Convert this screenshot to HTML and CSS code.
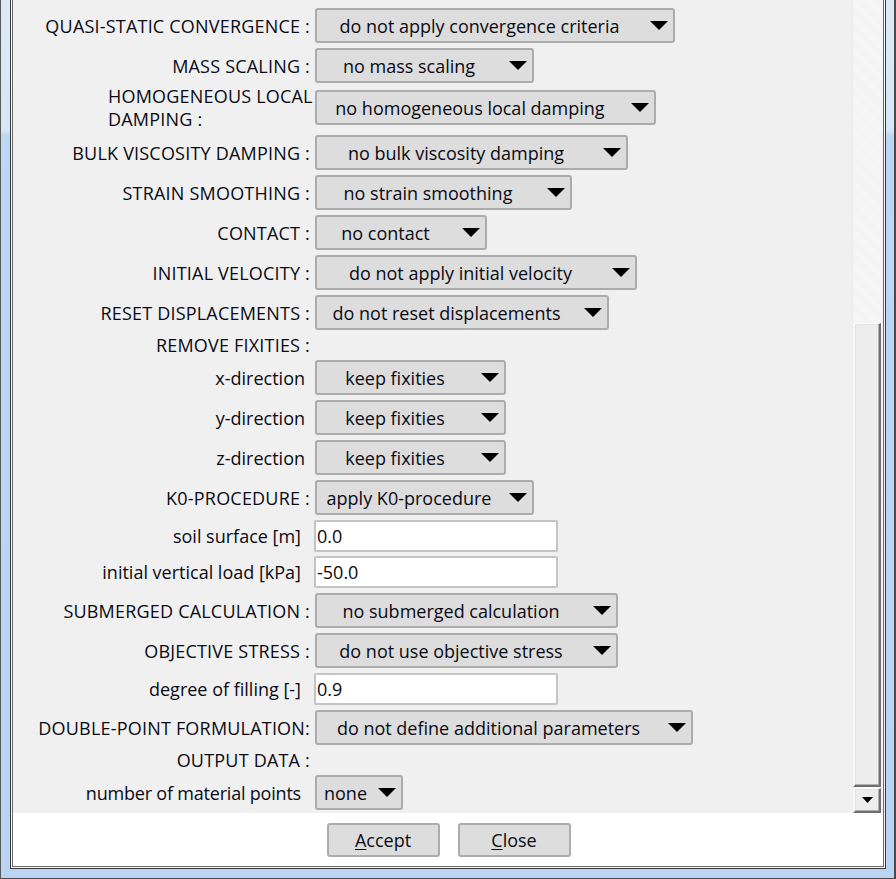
FILE: index.html
```html
<!DOCTYPE html>
<html>
<head>
<meta charset="utf-8">
<link rel="stylesheet" href="styles.css">
</head>
<body>
<div class="frame">
  <div class="client">
    <div class="panel">
      <div class="main">
        <div class="form">
          <div class="row r1">
            <span class="lbl caps">QUASI-STATIC CONVERGENCE :</span>
            <div class="combo w360"><span class="val">do not apply convergence criteria</span><svg class="arr" width="18" height="9" viewBox="0 0 18 9"><polygon points="0,0 18,0 9,9"/></svg></div>
          </div>
          <div class="row">
            <span class="lbl caps">MASS SCALING :</span>
            <div class="combo w219"><span class="val">no mass scaling</span><svg class="arr" width="18" height="9" viewBox="0 0 18 9"><polygon points="0,0 18,0 9,9"/></svg></div>
          </div>
          <div class="row tall">
            <span class="lbl caps multi">HOMOGENEOUS LOCAL<br>DAMPING :</span>
            <div class="combo w341"><span class="val">no homogeneous local damping</span><svg class="arr" width="18" height="9" viewBox="0 0 18 9"><polygon points="0,0 18,0 9,9"/></svg></div>
          </div>
          <div class="row">
            <span class="lbl caps">BULK VISCOSITY DAMPING :</span>
            <div class="combo w313"><span class="val">no bulk viscosity damping</span><svg class="arr" width="18" height="9" viewBox="0 0 18 9"><polygon points="0,0 18,0 9,9"/></svg></div>
          </div>
          <div class="row">
            <span class="lbl caps">STRAIN SMOOTHING :</span>
            <div class="combo w257"><span class="val">no strain smoothing</span><svg class="arr" width="18" height="9" viewBox="0 0 18 9"><polygon points="0,0 18,0 9,9"/></svg></div>
          </div>
          <div class="row">
            <span class="lbl caps">CONTACT :</span>
            <div class="combo w172"><span class="val">no contact</span><svg class="arr" width="18" height="9" viewBox="0 0 18 9"><polygon points="0,0 18,0 9,9"/></svg></div>
          </div>
          <div class="row">
            <span class="lbl caps">INITIAL VELOCITY :</span>
            <div class="combo w322"><span class="val">do not apply initial velocity</span><svg class="arr" width="18" height="9" viewBox="0 0 18 9"><polygon points="0,0 18,0 9,9"/></svg></div>
          </div>
          <div class="row">
            <span class="lbl caps">RESET DISPLACEMENTS :</span>
            <div class="combo w294"><span class="val">do not reset displacements</span><svg class="arr" width="18" height="9" viewBox="0 0 18 9"><polygon points="0,0 18,0 9,9"/></svg></div>
          </div>
          <div class="row head">
            <span class="lbl caps">REMOVE FIXITIES :</span>
          </div>
          <div class="row">
            <span class="lbl pr10">x-direction</span>
            <div class="combo w191"><span class="val">keep fixities</span><svg class="arr" width="18" height="9" viewBox="0 0 18 9"><polygon points="0,0 18,0 9,9"/></svg></div>
          </div>
          <div class="row">
            <span class="lbl pr10">y-direction</span>
            <div class="combo w191"><span class="val">keep fixities</span><svg class="arr" width="18" height="9" viewBox="0 0 18 9"><polygon points="0,0 18,0 9,9"/></svg></div>
          </div>
          <div class="row">
            <span class="lbl pr10">z-direction</span>
            <div class="combo w191"><span class="val">keep fixities</span><svg class="arr" width="18" height="9" viewBox="0 0 18 9"><polygon points="0,0 18,0 9,9"/></svg></div>
          </div>
          <div class="row">
            <span class="lbl caps">K0-PROCEDURE :</span>
            <div class="combo w219"><span class="val">apply K0-procedure</span><svg class="arr" width="18" height="9" viewBox="0 0 18 9"><polygon points="0,0 18,0 9,9"/></svg></div>
          </div>
          <div class="row field">
            <span class="lbl pr15">soil surface [m]</span>
            <div class="txt">0.0</div>
          </div>
          <div class="row field gap4">
            <span class="lbl pr15">initial vertical load [kPa]</span>
            <div class="txt">-50.0</div>
          </div>
          <div class="row gap6">
            <span class="lbl caps">SUBMERGED CALCULATION :</span>
            <div class="combo w303"><span class="val">no submerged calculation</span><svg class="arr" width="18" height="9" viewBox="0 0 18 9"><polygon points="0,0 18,0 9,9"/></svg></div>
          </div>
          <div class="row">
            <span class="lbl caps">OBJECTIVE STRESS :</span>
            <div class="combo w303"><span class="val">do not use objective stress</span><svg class="arr" width="18" height="9" viewBox="0 0 18 9"><polygon points="0,0 18,0 9,9"/></svg></div>
          </div>
          <div class="row field">
            <span class="lbl pr15">degree of filling [-]</span>
            <div class="txt">0.9</div>
          </div>
          <div class="row">
            <span class="lbl caps">DOUBLE-POINT FORMULATION:</span>
            <div class="combo w378"><span class="val">do not define additional parameters</span><svg class="arr" width="18" height="9" viewBox="0 0 18 9"><polygon points="0,0 18,0 9,9"/></svg></div>
          </div>
          <div class="row head">
            <span class="lbl caps">OUTPUT DATA :</span>
          </div>
          <div class="row">
            <span class="lbl pr15 tight">number of material points</span>
            <div class="combo w88 small"><span class="val">none</span><svg class="arr" width="18" height="9" viewBox="0 0 18 9"><polygon points="0,0 18,0 9,9"/></svg></div>
          </div>
        </div>
        <div class="vscroll">
          <div class="thumb"></div>
          <div class="sbtn"><svg width="11" height="6" viewBox="0 0 11 6"><polygon points="0,0 11,0 5.5,6"/></svg></div>
        </div>
      </div>
      <div class="footer">
        <div class="btn"><u>A</u>ccept</div>
        <div class="btn"><u>C</u>lose</div>
      </div>
    </div>
  </div>
</div>
</body>
</html>
```
FILE: styles.css
```css
html, body {
  margin: 0;
  padding: 0;
}
body {
  width: 896px;
  height: 879px;
  overflow: hidden;
  font-family: "Open Sans", "Noto Sans", sans-serif;
  font-size: 18px;
  color: #0a0a14;
}
.frame {
  box-sizing: border-box;
  width: 896px;
  height: 879px;
  border-left: 1px solid #5a5a5a;
  border-right: 2px solid #4a4a4a;
  border-bottom: 1px solid #4a4a4a;
  padding: 0 8px 9px 9px;
  background: linear-gradient(to bottom, #dde9f6 0, #d6e6f7 130px, #bcd7f4 136px, #b9d5f3 100%);
  display: flex;
}
.client {
  flex: 1;
  display: flex;
  border: 1px solid #3a3a3a;
  border-top: none;
  padding: 0 1px 1px 1px;
  background: #f7f7f7;
}
.panel {
  flex: 1;
  display: flex;
  flex-direction: column;
  border: 1px solid #6a6a6a;
  border-top: none;
  background: #ffffff;
}
.main {
  height: 813px;
  display: flex;
  background: #f0f0f0;
  overflow: hidden;
}
.form {
  flex: 1;
  padding-top: 8px;
}
.row {
  display: flex;
  align-items: center;
  height: 35px;
  margin-bottom: 5px;
}
.row.tall {
  height: 45px;
  margin-top: -3px;
}
.row.head {
  height: 20px;
}
.row.field {
  height: 32px;
}
.row.gap4 {
  margin-top: -1px;
}
.row.gap6 {
  margin-top: 1px;
}
.lbl {
  flex: none;
  box-sizing: border-box;
  width: 302px;
  padding-right: 5px;
  text-align: right;
  white-space: nowrap;
  line-height: 22px;
}
.lbl.caps { letter-spacing: 0.2px; }
.lbl.tight { letter-spacing: -0.2px; }
.lbl.pr10 { padding-right: 10px; }
.lbl.pr15 { padding-right: 14px; }
.lbl.multi {
  text-align: left;
  padding-left: 95px;
  line-height: 23px;
}
.combo {
  box-sizing: border-box;
  height: 35px;
  display: flex;
  align-items: center;
  border: 2px solid #acacac;
  border-radius: 3px;
  background: #dddddd;
  padding-right: 5px;
}
.combo .val {
  flex: 1;
  text-align: center;
  white-space: nowrap;
  padding-right: 8px;
}
.combo.small .val { padding-right: 4px; }
.arr { flex: none; display: block; }
.arr polygon { fill: #000; }
.w360 { width: 360px; }
.w219 { width: 219px; }
.w341 { width: 341px; }
.w313 { width: 313px; }
.w257 { width: 257px; }
.w172 { width: 172px; }
.w322 { width: 322px; }
.w294 { width: 294px; }
.w191 { width: 191px; }
.w303 { width: 303px; }
.w378 { width: 378px; }
.w88 { width: 88px; }
.txt {
  box-sizing: border-box;
  width: 244px;
  height: 32px;
  margin-left: -1px;
  border: 2px solid #c4c4c4;
  border-radius: 2px;
  background: #fff;
  padding-left: 1px;
  line-height: 28px;
  white-space: nowrap;
}
.vscroll {
  flex: none;
  width: 30px;
  position: relative;
  background-color: #f5f5f5;
  background-image: repeating-linear-gradient(45deg, #f7f7f7 0 1px, #f2f2f2 1px 2px);
  border-left: 1px solid #ececec;
}
.thumb {
  position: absolute;
  left: 0;
  top: 323px;
  width: 28px;
  height: 464px;
  box-sizing: border-box;
  background: #ededed;
  border-top: 1px solid #fdfdfd;
  border-left: 2px solid #fafafa;
  border-right: 2px solid #6e6e6e;
  border-bottom: 2px solid #6e6e6e;
  box-shadow: inset -1px -1px 0 #b0b0b0, inset 1px 1px 0 #e2e2e2;
}
.sbtn {
  position: absolute;
  left: 0;
  top: 788px;
  width: 28px;
  height: 25px;
  box-sizing: border-box;
  background: #ededed;
  border-top: 1px solid #fdfdfd;
  border-left: 2px solid #fafafa;
  border-right: 2px solid #6e6e6e;
  border-bottom: 2px solid #6e6e6e;
  box-shadow: inset -1px -1px 0 #b0b0b0, inset 1px 1px 0 #e2e2e2;
  display: flex;
  align-items: center;
  justify-content: center;
}
.sbtn svg { display: block; }
.sbtn polygon { fill: #000; }
.footer {
  flex: 1;
  display: flex;
  justify-content: center;
  align-items: flex-start;
  gap: 18px;
  padding-top: 10px;
  padding-left: 1px;
  background: #ffffff;
}
.btn {
  box-sizing: border-box;
  width: 113px;
  height: 34px;
  border: 2px solid #acacac;
  border-radius: 3px;
  background: #dddddd;
  display: flex;
  align-items: center;
  justify-content: center;
}
.btn u {
  text-decoration: underline;
  text-underline-offset: 2px;
}
```
